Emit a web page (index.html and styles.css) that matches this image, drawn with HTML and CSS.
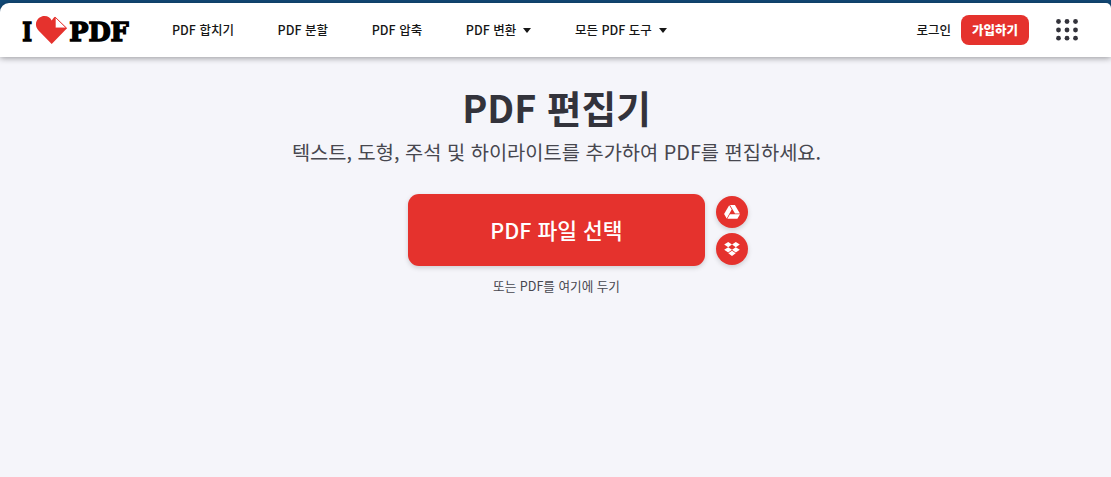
FILE: index.html
```html
<!DOCTYPE html>
<html lang="ko">
<head>
<meta charset="utf-8">
<title>PDF 편집기</title>
<link rel="stylesheet" href="styles.css">
</head>
<body>
<header class="header">
  <a class="logo" aria-label="I Love PDF">
    <svg width="112" height="44" viewBox="0 -6 112 44">
      <text class="logo-text" x="1.200" y="26.500" textLength="9.800" lengthAdjust="spacingAndGlyphs">I</text>
      <path fill="#e5322d" d="M30.700 30 17.500 16.500C11.500 9 17.500 2 23.500 2c3.700 0 5.700 1.700 7.200 4.500C31.700 4.800 32.500 3.700 34 2.700L46 14.300z"/>
      <path fill="#fff" stroke="#e5322d" stroke-width=".9" d="M34.200 3.200 45.300 14H34.200z"/>
      <text class="logo-text" x="48.200" y="26.500" textLength="59.500" lengthAdjust="spacingAndGlyphs">PDF</text>
    </svg>
  </a>
  <nav class="nav">
    <a>PDF 합치기</a>
    <a>PDF 분할</a>
    <a>PDF 압축</a>
    <a>PDF 변환<i class="caret"></i></a>
    <a>모든 PDF 도구<i class="caret"></i></a>
  </nav>
  <div class="account">
    <a class="login">로그인</a>
    <a class="signup">가입하기</a>
    <svg class="apps" width="24" height="24" viewBox="0 0 24 24" fill="#33333b">
      <circle cx="3.500" cy="3.500" r="2.400"/><circle cx="12" cy="3.500" r="2.400"/><circle cx="20.500" cy="3.500" r="2.400"/>
      <circle cx="3.500" cy="12" r="2.400"/><circle cx="12" cy="12" r="2.400"/><circle cx="20.500" cy="12" r="2.400"/>
      <circle cx="3.500" cy="20.200" r="2.400"/><circle cx="12" cy="20.200" r="2.400"/><circle cx="20.500" cy="20.200" r="2.400"/>
    </svg>
  </div>
</header>
<main class="main">
  <h1 class="title">PDF 편집기</h1>
  <p class="subtitle">텍스트, 도형, 주석 및 하이라이트를 추가하여 PDF를 편집하세요.</p>
  <div class="uploader">
    <button class="pick">PDF 파일 선택</button>
    <div class="sources">
      <button class="source" aria-label="Google Drive">
        <svg width="16" height="14" viewBox="0 0 16 14" fill="#fff">
          <path d="M5.200.2 7.700 4.600 2.700 13.400.1 8.900zM6 0h4.900l5 8.600H11zM5.900 9.300H16l-2.600 4.500H3.400z"/>
        </svg>
      </button>
      <button class="source" aria-label="Dropbox">
        <svg width="16" height="15" viewBox="0 0 16 15" fill="#fff">
          <path d="M4.200 0 8 2.600 4.200 5.200.2 2.600zM11.800 0l4 2.600-4 2.600L8 2.600zM4.200 5.200 8 7.800l-3.800 2.700-4-2.700zM11.800 5.200l4 2.600-4 2.700L8 7.800zM4.300 11.300 8 8.800l3.700 2.500L8 14z"/>
        </svg>
      </button>
    </div>
  </div>
  <p class="hint">또는 PDF를 여기에 두기</p>
</main>
</body>
</html>
```
FILE: styles.css
```css
* { box-sizing: border-box; }

body {
  margin: 0;
  height: 477px;
  padding-top: 3px;
  overflow: hidden;
  background: linear-gradient(#124a78 0 20px, #f5f5fa 20px);
  font-family: "Noto Sans CJK KR", sans-serif;
  color: #33333b;
}

.header {
  display: flex;
  align-items: center;
  height: 54px;
  padding: 0 32px 0 21px;
  background: #fff;
  border-radius: 9px 5px 0 0;
  box-shadow: 0 1px 6px rgba(0, 0, 0, .4);
}

.logo { display: flex; width: 112px; }

.logo-text {
  font: bold 26.5px "DejaVu Serif", serif;
  fill: #000;
  stroke: #000;
  stroke-width: 1.5px;
}

.nav {
  display: flex;
  gap: 43.7px;
  margin-left: 39px;
}

.nav a, .login {
  display: flex;
  align-items: center;
  font-size: 12.5px;
  font-weight: 500;
  line-height: 20px;
  color: #161616;
  white-space: nowrap;
}

.caret {
  margin-left: 7px;
  border: 4px solid transparent;
  border-top: 5px solid #161616;
  border-bottom: 0;
}

.account {
  display: flex;
  align-items: center;
  margin-left: auto;
}

.signup {
  width: 68px;
  height: 30px;
  margin: 0 26px 0 10px;
  border-radius: 8px;
  background: #e5322d;
  color: #fff;
  font-size: 12.5px;
  font-weight: 900;
  line-height: 30px;
  text-align: center;
}

.main {
  display: flex;
  flex-direction: column;
  align-items: center;
  padding: 25px 0 0 2px;
}

.title {
  margin: 0;
  font-size: 37.7px;
  font-weight: 700;
  line-height: 50px;
}

.subtitle {
  margin: 4px 0 0;
  font-size: 19.8px;
  font-weight: 400;
  line-height: 31px;
  color: #47474f;
  white-space: nowrap;
}

.uploader {
  display: flex;
  align-items: center;
  gap: 11px;
  margin: 27px 0 0 43px;
}

.pick, .source {
  padding: 0;
  border: 0;
  background: #e5322d;
  color: #fff;
  font-family: inherit;
  box-shadow: 0 2px 5px rgba(0, 0, 0, .16);
}

.pick {
  width: 297px;
  height: 72px;
  padding-bottom: 1px;
  border-radius: 11px;
  font-size: 21.5px;
  font-weight: 500;
}

.sources {
  display: flex;
  flex-direction: column;
  gap: 5px;
  padding-top: 1px;
}

.source {
  display: grid;
  place-items: center;
  width: 32px;
  height: 32px;
  border-radius: 50%;
}

.hint {
  margin: 11px 0 0;
  font-size: 12.6px;
  line-height: 18px;
  color: #47474f;
}
```
